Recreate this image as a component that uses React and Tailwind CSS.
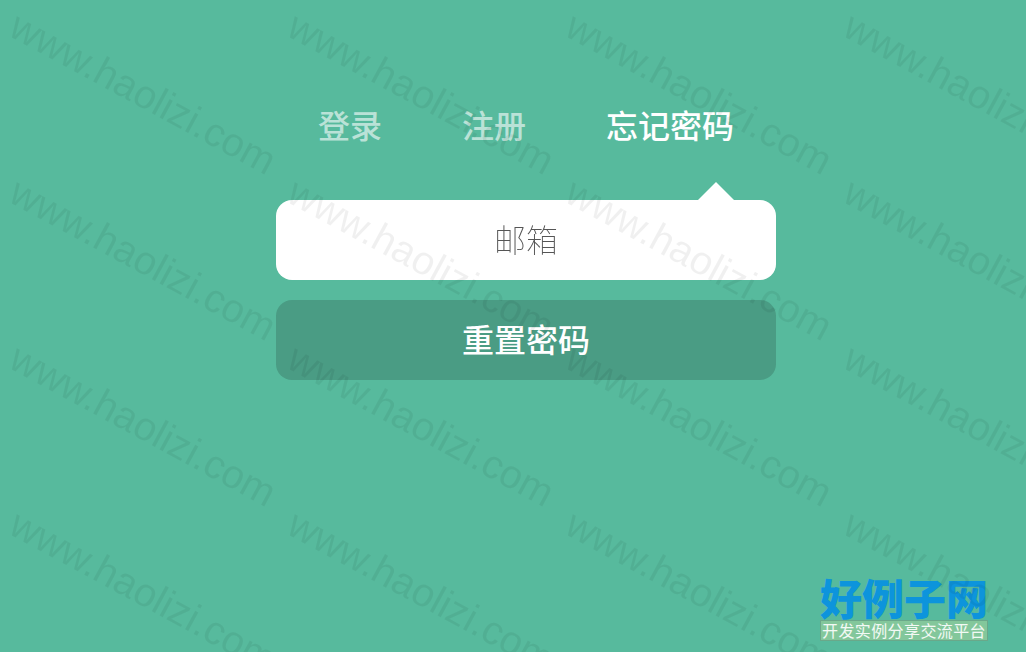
const cjk = "font-['Roboto','Noto_Sans_CJK_SC',sans-serif]";
const marks = Array.from({ length: 16 }, (_, i) => i);

function Watermark() {
  return (
    <div className="absolute inset-0 overflow-hidden pointer-events-none grid grid-cols-[repeat(4,278px)] auto-rows-[166px] pl-[24px] pt-[3px]">
      {marks.map((i) => (
        <div key={i} className="h-[166px] w-[278px]">
          <span className="block w-max origin-top-left rotate-[28.5deg] font-['Liberation_Sans',sans-serif] text-[40px] leading-[44px] text-black/[0.06]">
            www.haolizi.com
          </span>
        </div>
      ))}
    </div>
  );
}

function Logo() {
  return (
    <div className="absolute left-[820px] top-[574px] w-[168px]">
      <div className="font-['Noto_Sans_CJK_SC',sans-serif] font-black text-[42px] leading-[46px] text-[#0d94dc] whitespace-nowrap">
        好例子网
      </div>
      <div className="h-[21px] border border-[#6aa88a] bg-[#83c79b] font-['Noto_Sans_CJK_SC',sans-serif] text-[16px] tracking-[0.4px] leading-[19px] text-white/90 text-center whitespace-nowrap overflow-hidden">
        开发实例分享交流平台
      </div>
    </div>
  );
}

export default function App() {
  return (
    <div className={`relative h-[652px] w-full overflow-hidden bg-[#57ba9d] ${cjk}`}>
      <div className="ml-[276px] w-[500px] pt-[106px]">
        <div className="flex justify-center gap-20 text-[32px] font-medium leading-[42px] h-[94px]">
          <span className="text-white/60">登录</span>
          <span className="text-white/60">注册</span>
          <span className="text-white">忘记密码</span>
        </div>
        <div className="relative">
          <div className="absolute -top-[18px] right-[42px] h-0 w-0 border-x-[18px] border-b-[18px] border-x-transparent border-b-white"></div>
          <input
            placeholder="邮箱"
            className="block h-20 w-full rounded-2xl bg-white pt-[2px] text-center text-[32px] font-thin outline-none will-change-transform placeholder:text-[#555]"
          />
        </div>
        <button className="mt-5 block h-20 w-full rounded-2xl bg-[#4a9c84] pt-[2px] text-center text-[32px] font-medium text-white">
          重置密码
        </button>
      </div>
      <Logo />
      <Watermark />
    </div>
  );
}
